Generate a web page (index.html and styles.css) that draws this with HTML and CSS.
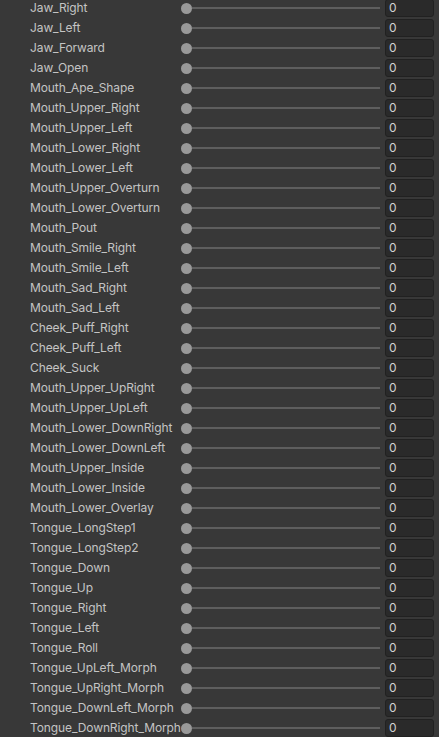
FILE: index.html
```html
<!DOCTYPE html>
<html>
<head>
<meta charset="utf-8">
<link rel="stylesheet" href="styles.css">
</head>
<body>
<div class="list">
  <div class="row"><span class="label">Jaw_Right</span><div class="slider"><span class="knob"></span><span class="track"></span></div><div class="field">0</div></div>
  <div class="row"><span class="label">Jaw_Left</span><div class="slider"><span class="knob"></span><span class="track"></span></div><div class="field">0</div></div>
  <div class="row"><span class="label">Jaw_Forward</span><div class="slider"><span class="knob"></span><span class="track"></span></div><div class="field">0</div></div>
  <div class="row"><span class="label">Jaw_Open</span><div class="slider"><span class="knob"></span><span class="track"></span></div><div class="field">0</div></div>
  <div class="row"><span class="label">Mouth_Ape_Shape</span><div class="slider"><span class="knob"></span><span class="track"></span></div><div class="field">0</div></div>
  <div class="row"><span class="label">Mouth_Upper_Right</span><div class="slider"><span class="knob"></span><span class="track"></span></div><div class="field">0</div></div>
  <div class="row"><span class="label">Mouth_Upper_Left</span><div class="slider"><span class="knob"></span><span class="track"></span></div><div class="field">0</div></div>
  <div class="row"><span class="label">Mouth_Lower_Right</span><div class="slider"><span class="knob"></span><span class="track"></span></div><div class="field">0</div></div>
  <div class="row"><span class="label">Mouth_Lower_Left</span><div class="slider"><span class="knob"></span><span class="track"></span></div><div class="field">0</div></div>
  <div class="row"><span class="label">Mouth_Upper_Overturn</span><div class="slider"><span class="knob"></span><span class="track"></span></div><div class="field">0</div></div>
  <div class="row"><span class="label">Mouth_Lower_Overturn</span><div class="slider"><span class="knob"></span><span class="track"></span></div><div class="field">0</div></div>
  <div class="row"><span class="label">Mouth_Pout</span><div class="slider"><span class="knob"></span><span class="track"></span></div><div class="field">0</div></div>
  <div class="row"><span class="label">Mouth_Smile_Right</span><div class="slider"><span class="knob"></span><span class="track"></span></div><div class="field">0</div></div>
  <div class="row"><span class="label">Mouth_Smile_Left</span><div class="slider"><span class="knob"></span><span class="track"></span></div><div class="field">0</div></div>
  <div class="row"><span class="label">Mouth_Sad_Right</span><div class="slider"><span class="knob"></span><span class="track"></span></div><div class="field">0</div></div>
  <div class="row"><span class="label">Mouth_Sad_Left</span><div class="slider"><span class="knob"></span><span class="track"></span></div><div class="field">0</div></div>
  <div class="row"><span class="label">Cheek_Puff_Right</span><div class="slider"><span class="knob"></span><span class="track"></span></div><div class="field">0</div></div>
  <div class="row"><span class="label">Cheek_Puff_Left</span><div class="slider"><span class="knob"></span><span class="track"></span></div><div class="field">0</div></div>
  <div class="row"><span class="label">Cheek_Suck</span><div class="slider"><span class="knob"></span><span class="track"></span></div><div class="field">0</div></div>
  <div class="row"><span class="label">Mouth_Upper_UpRight</span><div class="slider"><span class="knob"></span><span class="track"></span></div><div class="field">0</div></div>
  <div class="row"><span class="label">Mouth_Upper_UpLeft</span><div class="slider"><span class="knob"></span><span class="track"></span></div><div class="field">0</div></div>
  <div class="row"><span class="label">Mouth_Lower_DownRight</span><div class="slider"><span class="knob"></span><span class="track"></span></div><div class="field">0</div></div>
  <div class="row"><span class="label">Mouth_Lower_DownLeft</span><div class="slider"><span class="knob"></span><span class="track"></span></div><div class="field">0</div></div>
  <div class="row"><span class="label">Mouth_Upper_Inside</span><div class="slider"><span class="knob"></span><span class="track"></span></div><div class="field">0</div></div>
  <div class="row"><span class="label">Mouth_Lower_Inside</span><div class="slider"><span class="knob"></span><span class="track"></span></div><div class="field">0</div></div>
  <div class="row"><span class="label">Mouth_Lower_Overlay</span><div class="slider"><span class="knob"></span><span class="track"></span></div><div class="field">0</div></div>
  <div class="row"><span class="label">Tongue_LongStep1</span><div class="slider"><span class="knob"></span><span class="track"></span></div><div class="field">0</div></div>
  <div class="row"><span class="label">Tongue_LongStep2</span><div class="slider"><span class="knob"></span><span class="track"></span></div><div class="field">0</div></div>
  <div class="row"><span class="label">Tongue_Down</span><div class="slider"><span class="knob"></span><span class="track"></span></div><div class="field">0</div></div>
  <div class="row"><span class="label">Tongue_Up</span><div class="slider"><span class="knob"></span><span class="track"></span></div><div class="field">0</div></div>
  <div class="row"><span class="label">Tongue_Right</span><div class="slider"><span class="knob"></span><span class="track"></span></div><div class="field">0</div></div>
  <div class="row"><span class="label">Tongue_Left</span><div class="slider"><span class="knob"></span><span class="track"></span></div><div class="field">0</div></div>
  <div class="row"><span class="label">Tongue_Roll</span><div class="slider"><span class="knob"></span><span class="track"></span></div><div class="field">0</div></div>
  <div class="row"><span class="label">Tongue_UpLeft_Morph</span><div class="slider"><span class="knob"></span><span class="track"></span></div><div class="field">0</div></div>
  <div class="row"><span class="label">Tongue_UpRight_Morph</span><div class="slider"><span class="knob"></span><span class="track"></span></div><div class="field">0</div></div>
  <div class="row"><span class="label">Tongue_DownLeft_Morph</span><div class="slider"><span class="knob"></span><span class="track"></span></div><div class="field">0</div></div>
  <div class="row"><span class="label">Tongue_DownRight_Morph</span><div class="slider"><span class="knob"></span><span class="track"></span></div><div class="field">0</div></div>
</div>
</body>
</html>
```
FILE: styles.css
```css
html, body {
  margin: 0;
  padding: 0;
  background: #383838;
  overflow: hidden;
}
body {
  font-family: Inter, "Noto Sans", "Liberation Sans", sans-serif;
  font-size: 12px;
  color: #c4c4c4;
}
.list {
  display: flex;
  flex-direction: column;
  margin-top: -2px;
}
.row {
  display: flex;
  align-items: center;
  height: 20px;
  padding-left: 30px;
  padding-right: 5px;
}
.label {
  width: 151px;
  flex: none;
  white-space: nowrap;
  line-height: 20px;
  letter-spacing: -0.1px;
}
.slider {
  flex: 1;
  display: flex;
  align-items: center;
  height: 20px;
  margin-right: 5px;
}
.knob {
  width: 11px;
  height: 11px;
  border-radius: 50%;
  background: #999999;
  flex: none;
}
.track {
  flex: 1;
  height: 2px;
  background: #5e5e5e;
}
.field {
  width: 49px;
  height: 18px;
  box-sizing: border-box;
  background: #2a2a2a;
  border: 1px solid #212121;
  border-radius: 3px;
  padding-left: 3px;
  line-height: 16px;
  color: #d2d2d2;
  flex: none;
}
```
